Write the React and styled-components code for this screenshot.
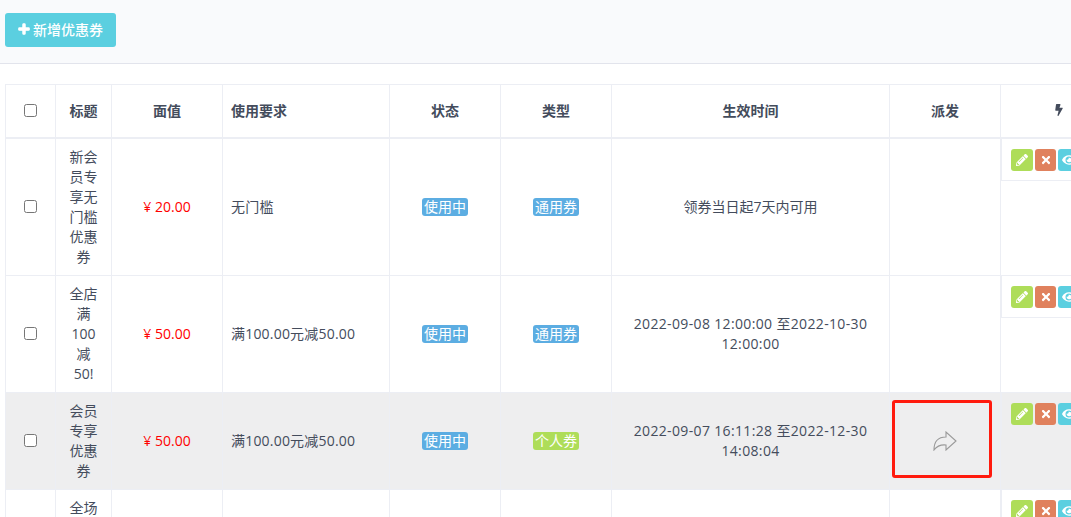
import React from "react";
import styled, { createGlobalStyle } from "styled-components";
import { FaPlus, FaPencilAlt, FaTimes, FaEye, FaBolt } from "react-icons/fa";

const Global = createGlobalStyle`
  html, body { margin: 0; padding: 0; background: #fff; height: 517px; overflow: hidden; }
  body { font-family: "Open Sans", "Noto Sans CJK SC", sans-serif; font-size: 14px; color: #444c5c; }
`;

const Toolbar = styled.div`
  height: 63px;
  background: #f9fafc;
  border-bottom: 1px solid #e2e4ec;
  padding-left: 5px;
  display: flex;
  align-items: flex-start;
`;

const AddButton = styled.button`
  margin-top: 13px;
  width: 111px;
  height: 34px;
  border: 0;
  border-radius: 3px;
  background: #5bcfe0;
  color: #fff;
  font: 500 14px "Open Sans", "Noto Sans CJK SC", sans-serif;
  display: flex;
  align-items: center;
  justify-content: center;
  gap: 3px;
  padding: 0 0 2px;
`;

const TableWrap = styled.div`
  margin: 20px 0 0 5px;
  overflow: hidden;
`;

const Table = styled.table`
  width: 1112px;
  table-layout: fixed;
  border-collapse: collapse;
`;

const Th = styled.th`
  height: 53px;
  box-sizing: border-box;
  padding: 8px;
  border: 1px solid #eceef4;
  border-bottom: 2px solid #eceef4;
  font-size: 14px;
  font-weight: 700;
  line-height: 20px;
  text-align: ${(p) => p.$align || "center"};
  color: #444c5c;
`;

const Row = styled.tr`
  background: ${(p) => (p.$active ? "#eeeeef" : "#fff")};
`;

const Td = styled.td`
  padding: 8px;
  border: 1px solid #eceef4;
  line-height: 20px;
  text-align: ${(p) => p.$align || "center"};
  letter-spacing: ${(p) => p.$spacing || 0}px;
  vertical-align: ${(p) => p.$valign || "middle"};
  position: relative;
`;

const ActionTd = styled.td`
  padding: 0;
  border: 1px solid #eceef4;
  vertical-align: top;
  overflow: hidden;
`;

const ActionBox = styled.div`
  display: flex;
  gap: 2px;
  padding: 10px 0 0 9px;
  height: 42px;
  box-sizing: border-box;
  border-left: 1px solid #eceef4;
  border-bottom: ${(p) => (p.$active ? "0" : "1px solid #eceef4")};
`;

const Check = styled.input.attrs({ type: "checkbox" })`
  width: 13px;
  height: 13px;
  margin: 0 auto;
  display: block;
`;

const Price = styled.span`
  color: #f00;
`;

const Tag = styled.span`
  display: inline-block;
  background: ${(p) => p.$bg};
  color: #fff;
  font-size: 14px;
  line-height: 18px;
  height: 18px;
  padding: 0 2px;
  margin-bottom: 1px;
  border-radius: 3px;
  vertical-align: middle;
`;

const Act = styled.span`
  width: ${(p) => p.$w || 22}px;
  height: 22px;
  flex: none;
  border-radius: 3px;
  background: ${(p) => p.$bg};
  color: #fff;
  font-size: 12px;
  display: flex;
  align-items: center;
  justify-content: center;
`;

const RedBox = styled.div`
  position: absolute;
  left: 2px;
  top: 7px;
  width: 100px;
  height: 78px;
  box-sizing: border-box;
  border: 3px solid #ff1a0d;
  border-radius: 3px;
`;

const ShareIcon = styled.svg`
  display: block;
  margin: 0 auto;
`;

const Share = () => (
  <ShareIcon width="24" height="20" viewBox="0 0 24 20" fill="none" stroke="#999999" strokeWidth="1.1">
    <path d="M1 19 C1 11 5 6 13 6 V1 L23 10 L13 19 V14 C8 13.500 4 15 1 19 Z" />
  </ShareIcon>
);

const rows = [
  { lines: ["新会", "员专", "享无", "门槛", "优惠", "券"], price: "¥ 20.00", req: "无门槛", status: "使用中", type: "通用券", tc: "#5cade2", time: "领券当日起7天内可用" },
  { lines: ["全店", "满", "100", "减", "50!"], price: "¥ 50.00", req: "满100.00元减50.00", status: "使用中", type: "通用券", tc: "#5cade2", time: "2022-09-08 12:00:00 至2022-10-30 12:00:00", spacing: 0.35 },
  { lines: ["会员", "专享", "优惠", "券"], price: "¥ 50.00", req: "满100.00元减50.00", status: "使用中", type: "个人券", tc: "#aedd59", time: "2022-09-07 16:11:28 至2022-12-30 14:08:04", spacing: 0.35, active: true },
  { lines: ["全场"], partial: true },
];

export default function App() {
  return (
    <>
      <Global />
      <Toolbar>
        <AddButton><FaPlus size={12} stroke="currentColor" strokeWidth={50} />新增优惠券</AddButton>
      </Toolbar>
      <TableWrap>
        <Table>
          <colgroup>
            <col width="50" /><col width="56" /><col width="111" /><col width="167" />
            <col width="111" /><col width="111" /><col width="278" /><col width="111" /><col width="117" />
          </colgroup>
          <thead>
            <tr>
              <Th><Check /></Th>
              <Th>标题</Th>
              <Th>面值</Th>
              <Th $align="left">使用要求</Th>
              <Th>状态</Th>
              <Th>类型</Th>
              <Th>生效时间</Th>
              <Th>派发</Th>
              <Th><FaBolt size={12} /></Th>
            </tr>
          </thead>
          <tbody>
            {rows.map((r) => (
              <Row key={r.lines.join("")} $active={r.active}>
                <Td>{!r.partial && <Check />}</Td>
                <Td $valign={r.partial ? "top" : undefined}>
                  {r.lines.map((l, i) => <React.Fragment key={i}>{i > 0 && <br />}{l}</React.Fragment>)}
                </Td>
                <Td>{r.price && <Price>{r.price}</Price>}</Td>
                <Td $align="left" $spacing={0.2}>{r.req}</Td>
                <Td>{r.status && <Tag $bg="#5cade2">{r.status}</Tag>}</Td>
                <Td>{r.type && <Tag $bg={r.tc}>{r.type}</Tag>}</Td>
                <Td $spacing={r.spacing}>{r.time}</Td>
                <Td>
                  {r.active && <Share />}
                  {r.active && <RedBox />}
                </Td>
                <ActionTd>
                  <ActionBox $active={r.active}>
                    <Act $bg="#aedd59"><FaPencilAlt /></Act>
                    <Act $bg="#e0815d" $w={21}><FaTimes /></Act>
                    <Act $bg="#5bcfe0"><FaEye size={14} /></Act>
                  </ActionBox>
                </ActionTd>
              </Row>
            ))}
          </tbody>
        </Table>
      </TableWrap>
    </>
  );
}
